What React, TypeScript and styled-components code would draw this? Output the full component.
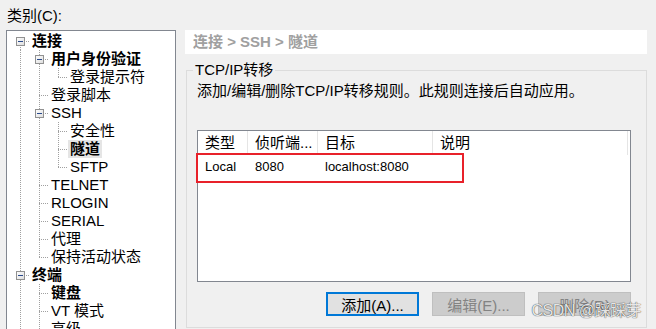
import React from "react";
import styled, { createGlobalStyle, css } from "styled-components";

const GlobalStyle = createGlobalStyle`
  html, body {
    margin: 0;
    padding: 0;
    background: #f0f0f0;
    overflow: hidden;
  }

  body {
    font-family: "Liberation Sans", "Noto Sans CJK SC", sans-serif;
    color: #000;
  }
`;

const FONT = `"Liberation Sans", "Noto Sans CJK SC", sans-serif`;
const DOTS_V = "repeating-linear-gradient(to bottom, #a0a0a0 0 1px, transparent 1px 2px)";
const DOTS_H = "repeating-linear-gradient(to right, #a0a0a0 0 1px, transparent 1px 2px)";

type Guide = "full" | "top" | "bottom" | "none";

interface TreeRow {
  label: string;
  level: number;
  guides: Guide[];
  bold?: boolean;
  selected?: boolean;
  expander?: boolean;
}

const treeRows: TreeRow[] = [
  { label: "连接", level: 0, guides: ["bottom"], bold: true, expander: true },
  { label: "用户身份验证", level: 1, guides: ["full", "full"], bold: true, expander: true },
  { label: "登录提示符", level: 2, guides: ["full", "full", "top"] },
  { label: "登录脚本", level: 1, guides: ["full", "full"] },
  { label: "SSH", level: 1, guides: ["full", "full"], expander: true },
  { label: "安全性", level: 2, guides: ["full", "full", "full"] },
  { label: "隧道", level: 2, guides: ["full", "full", "full"], bold: true, selected: true },
  { label: "SFTP", level: 2, guides: ["full", "full", "top"] },
  { label: "TELNET", level: 1, guides: ["full", "full"] },
  { label: "RLOGIN", level: 1, guides: ["full", "full"] },
  { label: "SERIAL", level: 1, guides: ["full", "full"] },
  { label: "代理", level: 1, guides: ["full", "full"] },
  { label: "保持活动状态", level: 1, guides: ["full", "top"] },
  { label: "终端", level: 0, guides: ["full"], bold: true, expander: true },
  { label: "键盘", level: 1, guides: ["full", "full"], bold: true },
  { label: "VT 模式", level: 1, guides: ["full", "full"] },
  { label: "高级", level: 1, guides: ["full", "full"] },
];

const Page = styled.div`
  position: relative;
  display: flex;
  width: 656px;
  height: 329px;
  overflow: hidden;
`;

const LeftPane = styled.div`
  width: 176px;
  flex-shrink: 0;
  padding-left: 6px;
  box-sizing: border-box;
`;

const CategoryLabel = styled.div`
  margin: 6px 0 4px 1px;
  font-size: 15px;
  line-height: 20px;
`;

const TreeBox = styled.div`
  width: 170px;
  height: 320px;
  box-sizing: border-box;
  border: 1px solid #828790;
  background: #fff;
  padding: 1px 0 0 4px;
  overflow: hidden;
`;

const Row = styled.div`
  display: flex;
  height: 18px;
`;

const GuideCell = styled.div<{ $v: Guide; $h: boolean }>`
  position: relative;
  width: 19px;
  height: 18px;
  flex-shrink: 0;

  &::before {
    content: "";
    position: absolute;
    left: 9px;
    width: 1px;
    background: ${DOTS_V};
    ${({ $v }) =>
      $v === "full"
        ? css`top: 0; bottom: 0;`
        : $v === "top"
          ? css`top: 0; height: 10px;`
          : $v === "bottom"
            ? css`top: 9px; bottom: 0;`
            : css`display: none;`}
  }

  &::after {
    content: "";
    position: absolute;
    display: ${({ $h }) => ($h ? "block" : "none")};
    left: 9px;
    top: 9px;
    width: 10px;
    height: 1px;
    background: ${DOTS_H};
  }
`;

const ExpanderIcon = styled.svg`
  position: absolute;
  left: 5px;
  top: 5px;
  z-index: 1;
`;

const TreeLabel = styled.span<{ $bold?: boolean; $selected?: boolean }>`
  padding: 0 2px;
  font-size: 15px;
  line-height: 18px;
  white-space: nowrap;
  font-weight: ${({ $bold }) => ($bold ? 700 : 400)};
  background: ${({ $selected }) => ($selected ? "#e5e5e5" : "transparent")};
`;

const RightPane = styled.div`
  margin-left: 9px;
  width: 462px;
  padding-top: 30px;
  display: flex;
  flex-direction: column;
`;

const Breadcrumb = styled.div`
  height: 24px;
  background: #fff;
  padding-left: 8px;
  font-size: 15px;
  line-height: 24px;
  font-weight: 700;
  color: #a0a0a0;
`;

const GroupBox = styled.fieldset`
  margin: 8px 0 0 1px;
  padding: 0;
  width: 461px;
  height: 266px;
  box-sizing: border-box;
  border: 1px solid #dcdcdc;
  min-width: 0;
`;

const GroupLegend = styled.legend`
  margin-left: 6px;
  padding: 0 2px;
  font-size: 15px;
  line-height: 16px;
`;

const Description = styled.div`
  margin: 3px 0 0 10px;
  font-size: 15px;
  line-height: 20px;
`;

const ListBox = styled.div`
  position: relative;
  margin: 29px 15px 0 10px;
  height: 152px;
  box-sizing: border-box;
  border: 1px solid #828790;
  background: #fff;
`;

const ListGrid = styled.div`
  display: grid;
  grid-template-columns: 50px 70px 115px 195px;
  height: 24px;
`;

const HeaderCell = styled.div`
  padding-left: 7px;
  border-right: 1px solid #e5e5e5;
  font-size: 15px;
  line-height: 24px;
  white-space: nowrap;
`;

const Cell = styled.div`
  padding-left: 7px;
  font-size: 13px;
  line-height: 24px;
  white-space: nowrap;
`;

const Highlight = styled.div`
  position: absolute;
  left: -2px;
  top: 22px;
  width: 268px;
  height: 30px;
  box-sizing: border-box;
  border: 2px solid #e8212a;
`;

const ButtonRow = styled.div`
  display: flex;
  justify-content: flex-end;
  gap: 13px;
  margin-top: 10px;
  padding-right: 15px;
`;

const Button = styled.button<{ $primary?: boolean }>`
  width: 93px;
  height: 24px;
  box-sizing: border-box;
  padding: 0;
  font-family: ${FONT};
  font-size: 15px;
  ${({ $primary }) =>
    $primary
      ? css`
          background: #e1e1e1;
          border: 2px solid #0078d7;
          color: #000;
        `
      : css`
          background: #cccccc;
          border: 1px solid #bfbfbf;
          color: #838383;
        `}
`;

const Watermark = styled.div`
  position: absolute;
  right: 15px;
  bottom: 8px;
  font-family: ${FONT};
  font-size: 16px;
  letter-spacing: -0.5px;
  color: rgba(255, 255, 255, 0.9);
  text-shadow: 0 0 1px rgba(0, 0, 0, 0.6), 0 0 1px rgba(0, 0, 0, 0.6);
  pointer-events: none;
`;

const Expander = () => (
  <ExpanderIcon width="9" height="9" viewBox="0 0 9 9">
    <defs>
      <linearGradient id="exp" x1="0" y1="0" x2="1" y2="1">
        <stop offset="0" stopColor="#ffffff" />
        <stop offset="1" stopColor="#dcdcdc" />
      </linearGradient>
    </defs>
    <rect x="0.5" y="0.5" width="8" height="8" fill="url(#exp)" stroke="#919191" />
    <line x1="2" y1="4.5" x2="7" y2="4.5" stroke="#2a4a8c" />
  </ExpanderIcon>
);

const columns = ["类型", "侦听端...", "目标", "说明"];
const entry = ["Local", "8080", "localhost:8080", ""];

export default function App() {
  return (
    <>
      <GlobalStyle />
      <Page>
        <LeftPane>
          <CategoryLabel>类别(C):</CategoryLabel>
          <TreeBox>
            {treeRows.map((row) => (
              <Row key={row.label}>
                {row.guides.map((g, i) => {
                  const last = i === row.guides.length - 1;
                  return (
                    <GuideCell key={i} $v={g} $h={last}>
                      {last && row.expander && <Expander />}
                    </GuideCell>
                  );
                })}
                <TreeLabel $bold={row.bold} $selected={row.selected}>
                  {row.label}
                </TreeLabel>
              </Row>
            ))}
          </TreeBox>
        </LeftPane>

        <RightPane>
          <Breadcrumb>连接 &gt; SSH &gt; 隧道</Breadcrumb>
          <GroupBox>
            <GroupLegend>TCP/IP转移</GroupLegend>
            <Description>添加/编辑/删除TCP/IP转移规则。此规则连接后自动应用。</Description>
            <ListBox>
              <ListGrid>
                {columns.map((c) => (
                  <HeaderCell key={c}>{c}</HeaderCell>
                ))}
              </ListGrid>
              <ListGrid>
                {entry.map((c, i) => (
                  <Cell key={i}>{c}</Cell>
                ))}
              </ListGrid>
              <Highlight />
            </ListBox>
            <ButtonRow>
              <Button $primary>添加(A)...</Button>
              <Button disabled>编辑(E)...</Button>
              <Button disabled>删除(R)</Button>
            </ButtonRow>
          </GroupBox>
        </RightPane>
        <Watermark>CSDN @踩踩芽</Watermark>
      </Page>
    </>
  );
}
